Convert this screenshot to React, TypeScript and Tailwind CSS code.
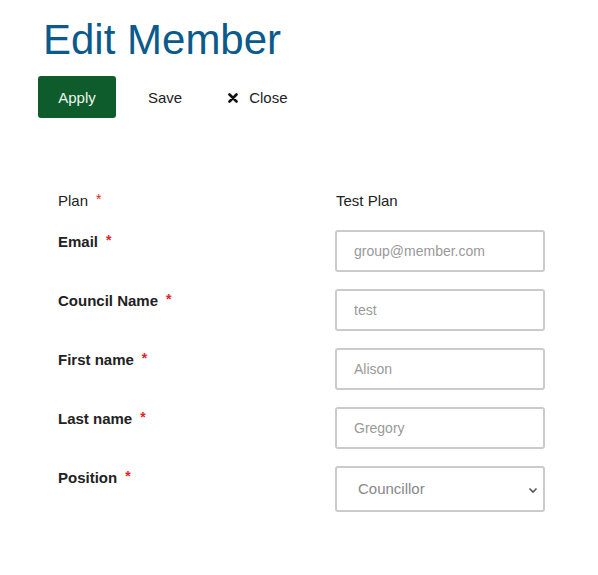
import React from "react";

function Req() {
  return <span className="ml-[8px] relative top-[-2px] text-[14px] text-[#e02424]">*</span>;
}

function Row({ label, children }: { label: string; children: React.ReactNode }) {
  return (
    <div className="flex items-start">
      <div className="w-[277px] pt-[1px] leading-[22px] text-[15px] text-[#222] font-bold">
        {label}
        <Req />
      </div>
      <div>{children}</div>
    </div>
  );
}

function Input({ value }: { value: string }) {
  return (
    <input
      readOnly
      placeholder={value}
      className="w-[210px] h-[42px] border-2 border-[#cbcbcb] rounded-[3px] pl-[17px] pr-[16px] text-[14px] text-[#999] placeholder:text-[#999] outline-none bg-white"
      style={{ fontFamily: '"Liberation Sans", Arial, sans-serif' }}
    />
  );
}

export default function App() {
  return (
    <div className="w-[598px] h-[575px] bg-white" style={{ fontFamily: '"Liberation Sans", Arial, sans-serif' }}>
      <div className="pl-[43px] pt-[17px]">
        <h1 className="text-[42px] leading-[46px] text-[#0b5a8c] font-normal">Edit Member</h1>
      </div>
      <div className="flex items-center pl-[38px] mt-[13px]">
        <button className="w-[78px] h-[42px] pt-[2px] rounded-[3px] bg-[#0e5c2b] text-[#eef5ee] text-[15px]">Apply</button>
        <span className="ml-[32px] pt-[2px] text-[15px] text-[#222]">Save</span>
        <span className="ml-[46px] pt-[2px] flex items-center text-[15px] text-[#222]">
          <svg width="10" height="10" viewBox="0 0 10 10" className="mr-[11px]">
            <path d="M1.5 1.5 L8.5 8.5 M8.5 1.5 L1.5 8.5" stroke="#111" strokeWidth="2.6" strokeLinecap="round" />
          </svg>
          Close
        </span>
      </div>
      <div className="pl-[58px] mt-[71px] flex flex-col">
        <div className="flex items-start">
          <div className="w-[277px] pt-[1px] leading-[22px] text-[15px] text-[#222]">
            Plan
            <Req />
          </div>
          <div className="pt-[1px] pl-[1px] leading-[22px] text-[15px] text-[#222]">Test Plan</div>
        </div>
        <div className="mt-[18px] flex flex-col gap-[17px]">
          <Row label="Email">
            <Input value="group@member.com" />
          </Row>
          <Row label="Council Name">
            <Input value="test" />
          </Row>
          <Row label="First name">
            <Input value="Alison" />
          </Row>
          <Row label="Last name">
            <Input value="Gregory" />
          </Row>
          <Row label="Position">
            <div className="relative w-[210px] h-[46px] border-2 border-[#cbcbcb] rounded-[3px] bg-white flex items-center pl-[21px]">
              <span className="text-[15px] text-[#888]">Councillor</span>
              <svg width="10" height="7" viewBox="0 0 10 7" className="absolute right-[5px] top-[19px]">
                <path d="M1.5 1.5 L5 5 L8.5 1.5" stroke="#555" strokeWidth="1.6" fill="none" />
              </svg>
            </div>
          </Row>
        </div>
      </div>
    </div>
  );
}
